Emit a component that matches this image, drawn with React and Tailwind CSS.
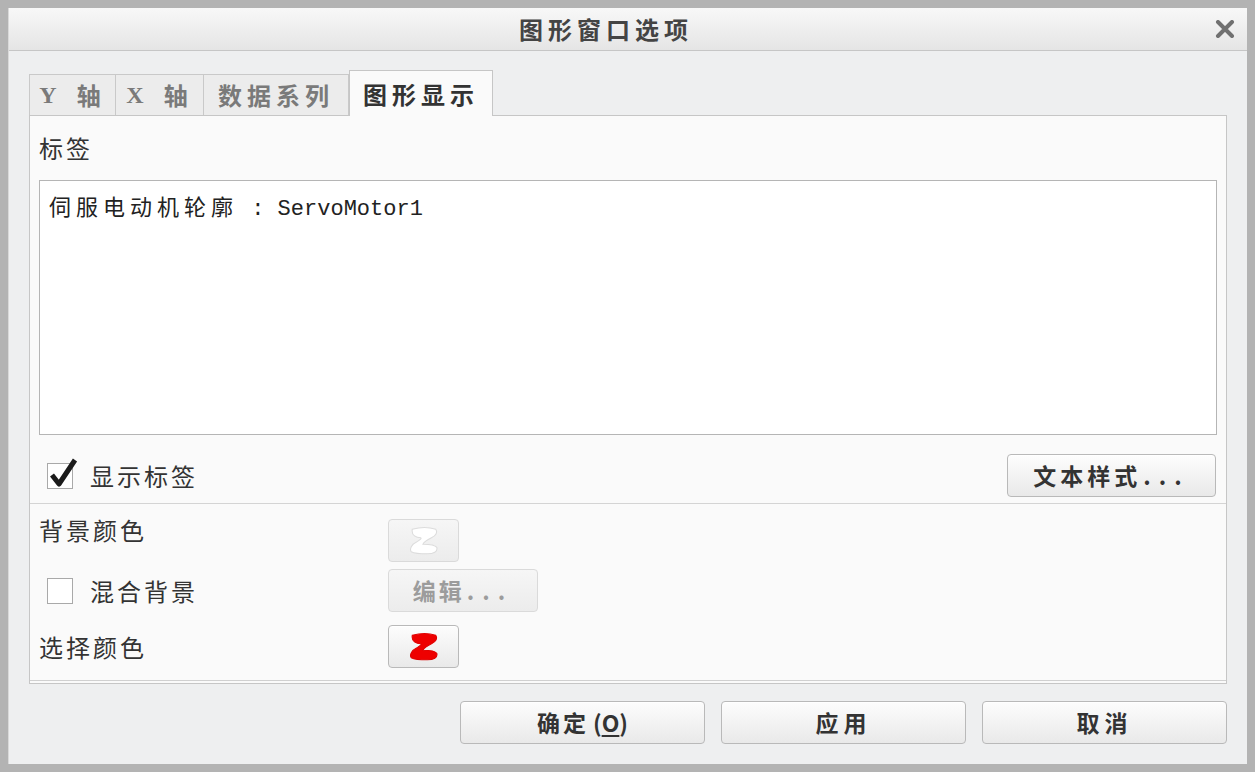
import React from 'react';

const cjk = { fontFamily: '"Noto Sans CJK SC", "Noto Sans", sans-serif' };
const mono = { fontFamily: '"Liberation Mono", "DejaVu Sans Mono", monospace' };
const serif = { fontFamily: '"Liberation Serif", "DejaVu Serif", serif' };

const btn =
  'rounded-[4px] border border-[#b9b9b9] bg-gradient-to-b from-[#fdfdfd] to-[#e9e9e9] shadow-[inset_0_1px_0_#ffffff] flex items-center justify-center';
const btnOff =
  'rounded-[4px] border border-[#dadada] bg-gradient-to-b from-[#f6f6f6] to-[#ececec] flex items-center justify-center';

function Blob({ fill, stroke }) {
  return (
    <svg width="32" height="30" viewBox="0 0 30 28">
      <path
        d="M4 3 C11 1 20 1 26 3 C28 6 26 9 22 11 C18 13 15 15 14 17 C19 17 25 17 27 20 C28 24 24 26 18 26 C12 26 7 26 3 24 C1 21 4 17 8 15 C11 13 13 12 12 11 C8 11 3 9 4 3 Z"
        fill={fill}
        stroke={stroke}
        strokeWidth="1"
      />
    </svg>
  );
}

function Check({ checked }) {
  return (
    <div className="relative w-[26px] h-[26px] border border-[#a9a9a9] bg-white shrink-0">
      {checked && (
        <svg className="absolute -left-[1px] -top-[8px]" width="32" height="34" viewBox="0 0 32 34">
          <path d="M5 19 L12 28 L28 4" fill="none" stroke="#1b1b1b" strokeWidth="5" strokeLinejoin="round" />
        </svg>
      )}
    </div>
  );
}

function Tab({ children, w, active }) {
  return (
    <div
      className={
        active
          ? `${w} h-[46px] bg-[#fafafa] border border-b-0 border-[#c6c6c6] flex items-center justify-center text-[24px] font-bold tracking-[5px] text-[#333] relative -mb-px z-10`
          : `${w} h-[41px] bg-[#ececec] border border-b-0 border-l-0 first:border-l border-[#c9c9c9] flex items-center justify-center text-[24px] font-bold tracking-[5px] text-[#7a7a7a]`
      }
    >
      {children}
    </div>
  );
}

export default function App() {
  return (
    <div style={cjk} className="w-[1255px] h-[772px] bg-[#b3b3b3] p-[8px] flex">
      <div className="flex-1 flex flex-col border-l border-[#d9d9d9] bg-[#eeeff0]">
        {/* title bar */}
        <div className="h-[43px] flex items-center bg-gradient-to-b from-[#f8f8f8] to-[#e5e5e5] border-b border-[#c6c6c6]">
          <div className="flex-1 text-center text-[24px] font-bold tracking-[5px] text-[#444]">图形窗口选项</div>
          <div className="w-[44px] flex items-center justify-center">
            <svg width="20" height="18" viewBox="0 0 20 18">
              <path d="M3 2 L17 16 M17 2 L3 16" stroke="#707070" strokeWidth="4" strokeLinecap="round" />
            </svg>
          </div>
        </div>

        <div className="flex-1 flex flex-col px-[20px] pt-[19px]">
          {/* tabs */}
          <div className="flex items-end">
            <Tab w="w-[87px]">
              <span style={serif} className="tracking-normal mr-[20px]">Y</span>轴
            </Tab>
            <Tab w="w-[88px]">
              <span style={serif} className="tracking-normal mr-[20px]">X</span>轴
            </Tab>
            <Tab w="w-[145px]">数据系列</Tab>
            <Tab w="w-[144px]" active>图形显示</Tab>
          </div>

          {/* panel */}
          <div className="h-[569px] border border-[#c6c6c6] bg-[#fafafa] flex flex-col">
            <div className="h-[64px] flex items-center px-[9px] text-[24px] tracking-[3px] text-[#333]">标签</div>
            <div className="mx-[9px] h-[255px] border border-[#b5b5b5] bg-white px-[9px] pt-[8px] text-[#222]">
              <span className="text-[22px] tracking-[5px]">伺服电动机轮廓</span>
              <span style={mono} className="text-[22px]"> : ServoMotor1</span>
            </div>
            <div className="flex items-center justify-between pl-[17px] pr-[10px] pt-[19px] pb-[6px]">
              <div className="flex items-center gap-[17px]">
                <Check checked />
                <span className="text-[24px] tracking-[3px] text-[#333]">显示标签</span>
              </div>
              <div className={`${btn} w-[209px] h-[43px] text-[23px] font-bold tracking-[4px] text-[#333]`}>
                文本样式<span className="tracking-[8px] ml-[2px]">...</span>
              </div>
            </div>
            <div className="border-t border-[#d4d4d4]" />

            <div className="flex items-start px-[9px]">
              <div className="w-[349px] h-[52px] flex items-center text-[24px] tracking-[3px] text-[#333]">背景颜色</div>
              <div className={`${btnOff} mt-[15px] w-[71px] h-[43px]`}>
                <Blob fill="#ffffff" stroke="#dcdcdc" />
              </div>
            </div>
            <div className="flex items-start px-[9px]">
              <div className="w-[349px] mt-[7px] h-[43px] flex items-center gap-[17px] pl-[8px]">
                <Check />
                <span className="text-[24px] tracking-[3px] text-[#333]">混合背景</span>
              </div>
              <div className={`${btnOff} mt-[7px] w-[150px] h-[43px] text-[23px] font-bold tracking-[3px] text-[#9c9c9c]`}>
                编辑<span className="tracking-[8px] ml-[2px]">...</span>
              </div>
            </div>
            <div className="flex items-start px-[9px]">
              <div className="w-[349px] mt-[13px] h-[43px] flex items-center text-[24px] tracking-[3px] text-[#333]">选择颜色</div>
              <div className={`${btn} mt-[13px] w-[71px] h-[43px]`}>
                <Blob fill="#ee0000" stroke="#e00000" />
              </div>
            </div>
            <div className="mt-auto border-b border-[#d0d0d0] mb-[2px]" />
          </div>

          {/* footer */}
          <div className="flex justify-end gap-[16px] pt-[17px]">
            <div className={`${btn} w-[245px] h-[43px] text-[23px] font-bold text-[#333]`}>
              <span className="tracking-[3px]">确定</span>
              <span className="ml-[4px]">
                (<span className="underline underline-offset-[3px]">O</span>)
              </span>
            </div>
            <div className={`${btn} w-[245px] h-[43px] text-[23px] font-bold tracking-[5px] text-[#333]`}>应用</div>
            <div className={`${btn} w-[245px] h-[43px] text-[23px] font-bold tracking-[5px] text-[#333]`}>取消</div>
          </div>
        </div>
      </div>
    </div>
  );
}
